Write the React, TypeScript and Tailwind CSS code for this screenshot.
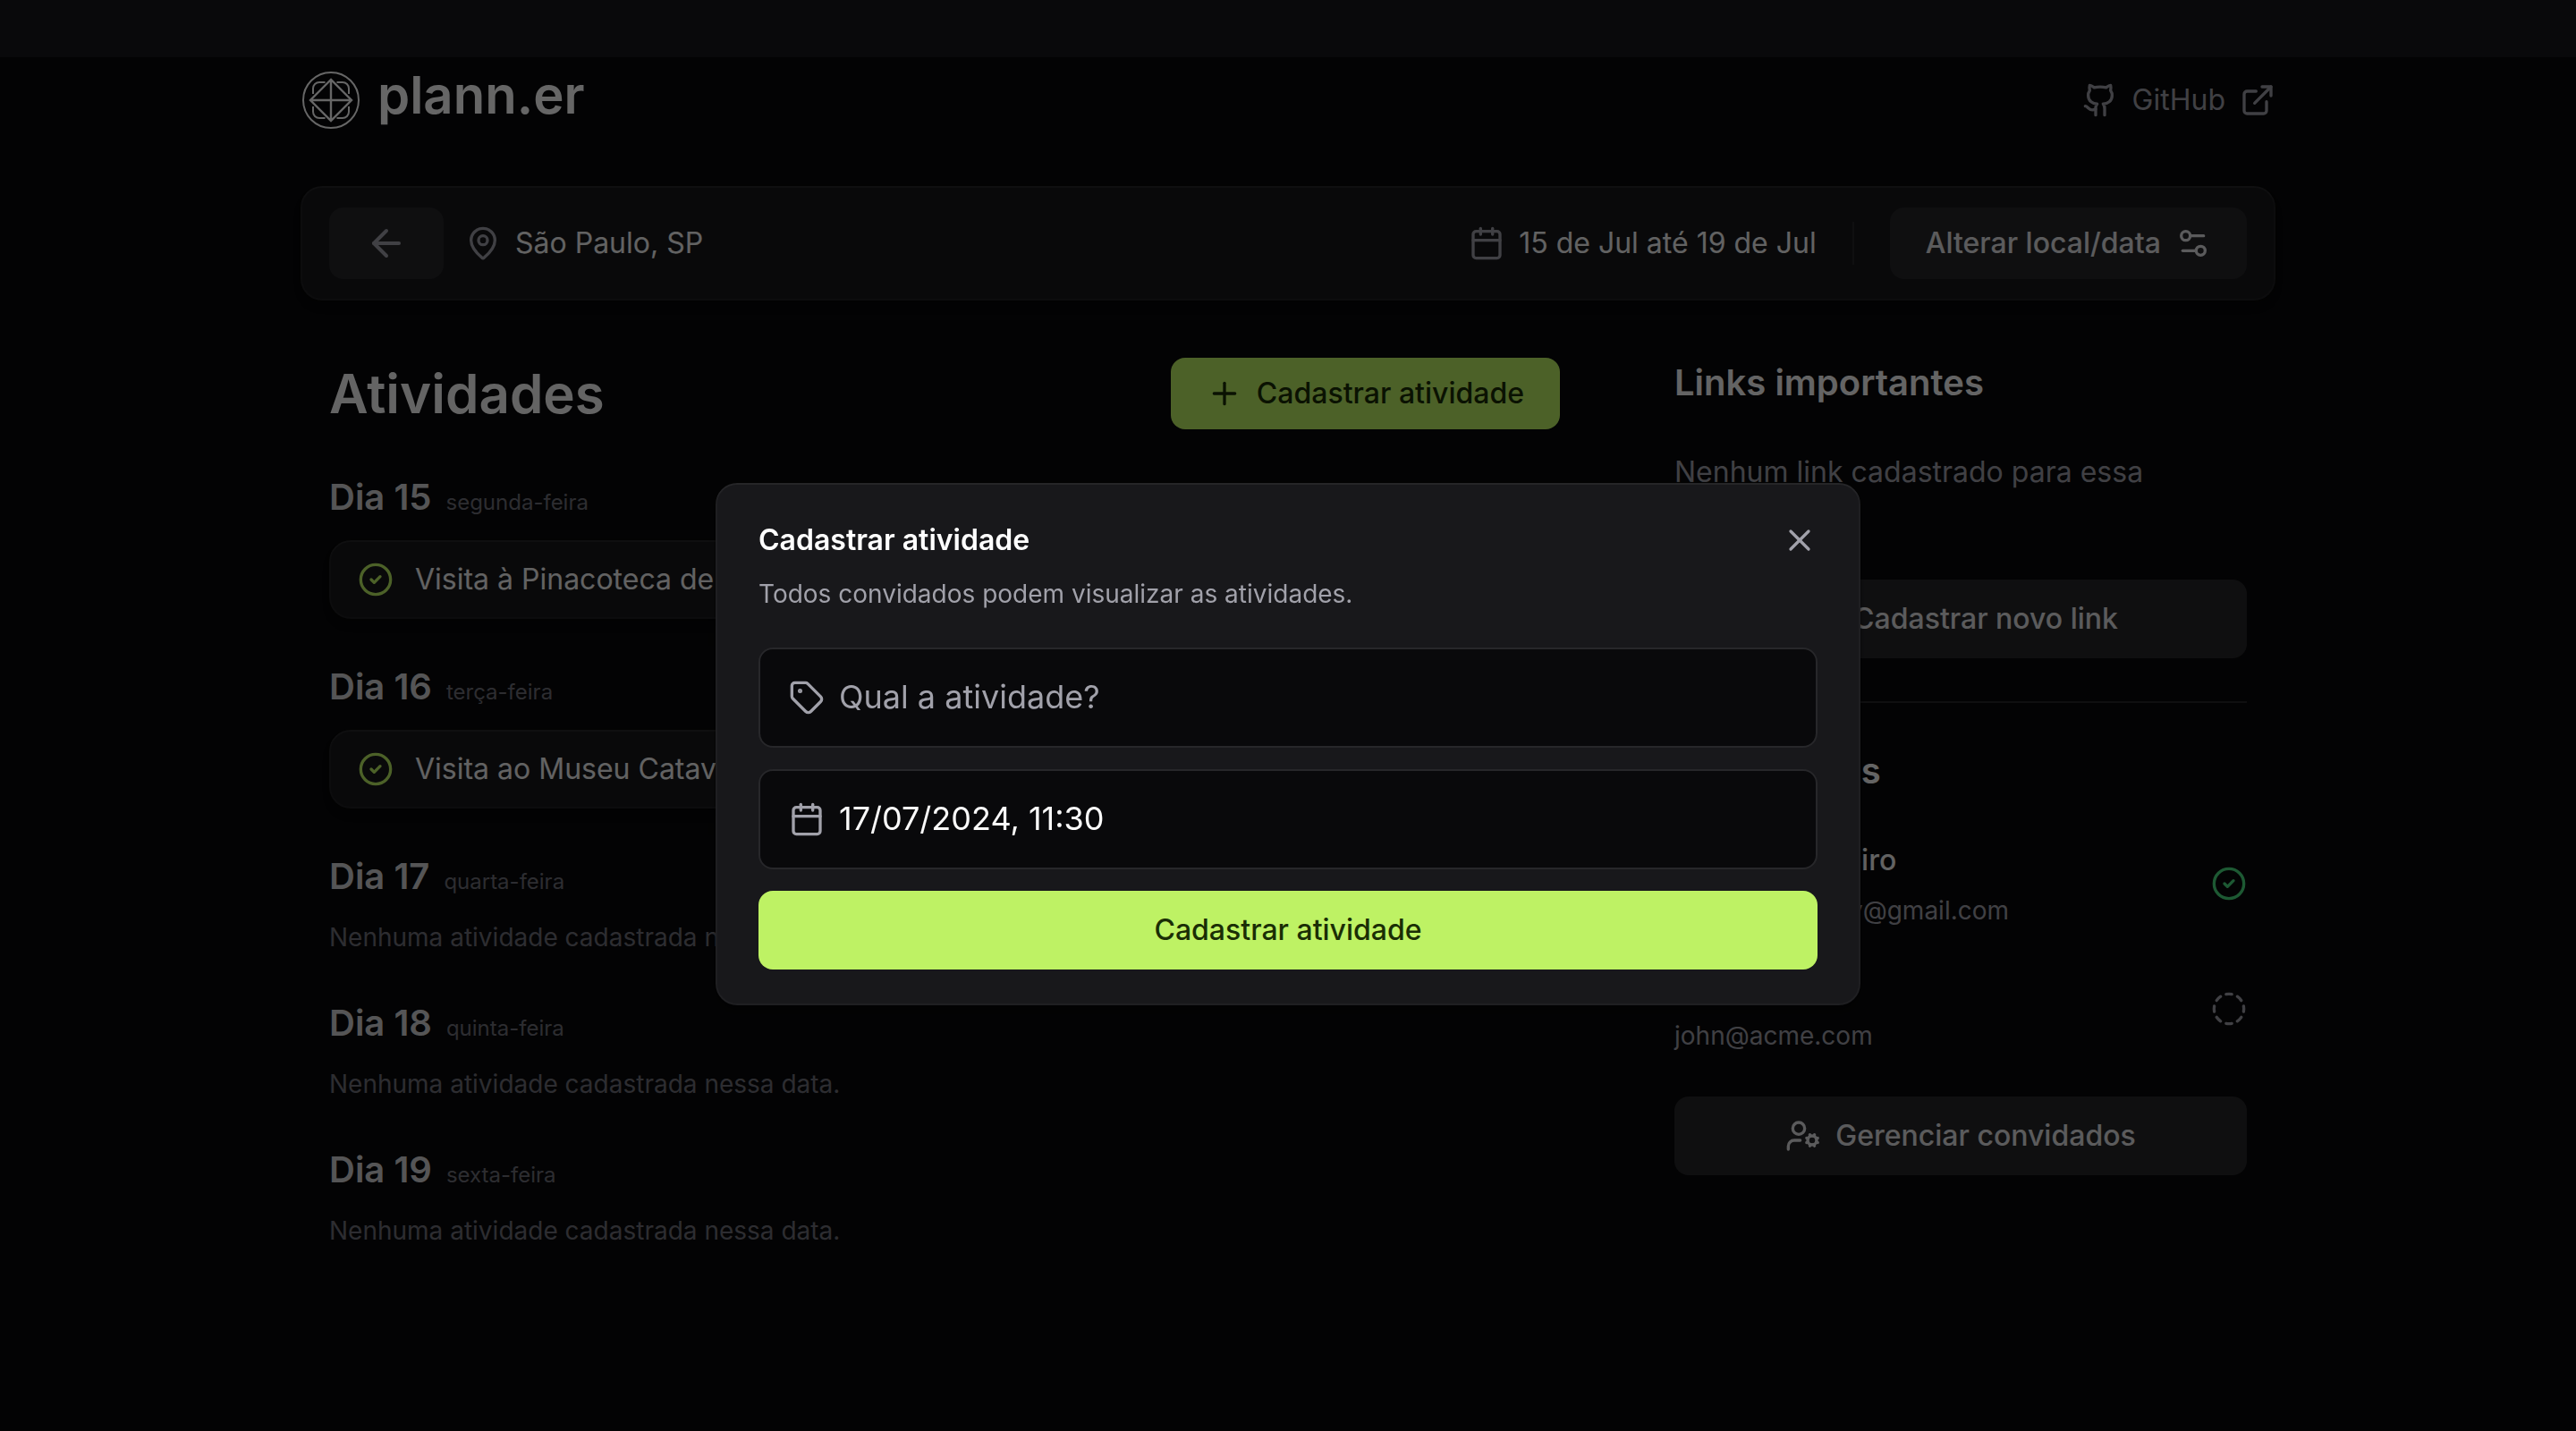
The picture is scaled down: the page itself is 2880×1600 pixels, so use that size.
import {
  ArrowLeft,
  Calendar,
  CircleCheck,
  CircleDashed,
  ExternalLink,
  Github,
  MapPin,
  Plus,
  Settings2,
  Tag,
  UserCog,
  X,
} from "lucide-react";
import type { ReactNode } from "react";

const shape =
  "bg-[#18181b] shadow-[0px_16px_16px_rgba(0,0,0,0.1),0px_8px_8px_rgba(0,0,0,0.1),0px_4px_4px_rgba(0,0,0,0.1),0px_0px_0px_2px_rgba(0,0,0,0.1),inset_0px_0px_0px_2px_rgba(255,255,255,0.03),inset_0px_2px_0px_rgba(255,255,255,0.03)]";

const days = [
  { label: "Dia 15", weekday: "segunda-feira", activity: "Visita à Pinacoteca de São Paulo" },
  { label: "Dia 16", weekday: "terça-feira", activity: "Visita ao Museu Catavento" },
  { label: "Dia 17", weekday: "quarta-feira" },
  { label: "Dia 18", weekday: "quinta-feira" },
  { label: "Dia 19", weekday: "sexta-feira" },
];

const guests = [
  { name: "Hector Monteiro", email: "hectormonteroy@gmail.com", confirmed: true },
  { name: "John Doe", email: "john@acme.com", confirmed: false },
];

function LogoMark() {
  return (
    <svg viewBox="0 0 64 64" className="size-16" fill="none" stroke="currentColor" aria-hidden="true">
      <circle cx="32" cy="32" r="31" strokeWidth="2" />
      <path d="M32 9 9 32l23 23 23-23L32 9ZM32 9v46M9 32h46" strokeWidth="2.4" />
      <path
        d="M25.5 12H19a7 7 0 0 0-7 7v6M38.5 12H45a7 7 0 0 1 7 7v6M52 39v6a7 7 0 0 1-7 7h-6.500M25.500 52H19a7 7 0 0 1-7-7v-6"
        strokeWidth="2"
      />
    </svg>
  );
}

function SecondaryButton({ children, className = "" }: { children: ReactNode; className?: string }) {
  return (
    <button
      type="button"
      className={`flex items-center justify-center gap-4 rounded-2xl bg-[#27272a] px-10 text-[32px] leading-12 font-medium text-[#e4e4e7] ${className}`}
    >
      {children}
    </button>
  );
}

function Header() {
  return (
    <header className="flex h-16 items-center justify-between">
      <div className="flex items-center gap-5 pl-0.5 text-white">
        <LogoMark />
        <span className="pb-3 text-[58px] leading-14 font-semibold">plann.er</span>
      </div>
      <a href="#github" className="flex items-center gap-4 text-[32px] leading-12 text-[#a1a1aa]">
        <Github className="size-10" />
        GitHub
        <ExternalLink className="size-10" />
      </a>
    </header>
  );
}

function DestinationBar() {
  return (
    <section className={`flex h-32 items-center justify-between rounded-3xl px-8 ${shape}`}>
      <div className="flex items-center gap-6">
        <button type="button" aria-label="Voltar" className="rounded-2xl bg-[#27272a] px-10 py-4 text-[#a1a1aa]">
          <ArrowLeft className="size-12" />
        </button>
        <div className="flex items-center gap-4">
          <MapPin className="size-10 text-[#a1a1aa]" />
          <span className="text-[32px] leading-12 text-[#f4f4f5]">São Paulo, SP</span>
        </div>
      </div>
      <div className="flex items-center gap-10">
        <div className="flex items-center gap-4">
          <Calendar className="size-10 text-[#a1a1aa]" />
          <span className="text-[32px] leading-12 text-[#f4f4f5]">15 de Jul até 19 de Jul</span>
        </div>
        <div className="h-12 w-0.5 bg-[#27272a]" />
        <SecondaryButton className="h-20">
          Alterar local/data
          <Settings2 className="size-10" />
        </SecondaryButton>
      </div>
    </section>
  );
}

function Activities() {
  return (
    <section className="flex flex-1 flex-col gap-12">
      <div className="flex items-center justify-between">
        <h2 className="text-[60px] leading-18 font-semibold text-[#fafafa]">Atividades</h2>
        <button
          type="button"
          className="flex h-20 items-center gap-4 rounded-2xl bg-[#bef264] px-10 text-[32px] leading-12 font-medium text-[#1a2e05]"
        >
          <Plus className="size-10" />
          Cadastrar atividade
        </button>
      </div>
      {days.map((day) => (
        <div key={day.label} className="flex flex-col gap-5">
          <div className="flex items-baseline gap-4">
            <h3 className="text-[40px] leading-14 font-semibold text-[#d4d4d8]">{day.label}</h3>
            <span className="text-2xl text-[#71717a]">{day.weekday}</span>
          </div>
          {day.activity ? (
            <div className={`flex h-22 items-center gap-6 rounded-3xl px-8 ${shape}`}>
              <CircleCheck className="size-10 text-[#bef264]" />
              <span className="text-[32px] leading-12 text-[#f4f4f5]">{day.activity}</span>
            </div>
          ) : (
            <p className="text-[28px] leading-10 text-[#71717a]">Nenhuma atividade cadastrada nessa data.</p>
          )}
        </div>
      ))}
    </section>
  );
}

function Sidebar() {
  return (
    <aside className="flex w-160 shrink-0 flex-col gap-12">
      <h2 className="text-[40px] leading-14 font-semibold text-[#fafafa]">Links importantes</h2>
      <p className="text-[32px] leading-12 text-[#a1a1aa]">Nenhum link cadastrado para essa viagem.</p>
      <SecondaryButton className="h-22">
        <Plus className="size-10" />
        Cadastrar novo link
      </SecondaryButton>
      <div className="h-0.5 bg-[#27272a]" />
      <h2 className="text-[40px] leading-14 font-semibold text-[#fafafa]">Convidados</h2>
      <ul className="flex flex-col gap-10">
        {guests.map((guest) => (
          <li key={guest.email} className="flex items-center justify-between">
            <div className="flex flex-col gap-3">
              <span className="text-[32px] leading-12 font-medium text-[#f4f4f5]">{guest.name}</span>
              <span className="text-[28px] leading-10 text-[#a1a1aa]">{guest.email}</span>
            </div>
            {guest.confirmed ? (
              <CircleCheck className="size-10 text-[#4ade80]" />
            ) : (
              <CircleDashed className="size-10 text-[#a1a1aa]" />
            )}
          </li>
        ))}
      </ul>
      <SecondaryButton className="h-22">
        <UserCog className="size-10" />
        Gerenciar convidados
      </SecondaryButton>
    </aside>
  );
}

function Field({ icon, label, value }: { icon: ReactNode; label: string; value?: string }) {
  return (
    <label className="flex h-28 items-center gap-4 rounded-2xl border-2 border-[#27272a] bg-[#09090b] px-8 text-[#a1a1aa]">
      {icon}
      <input
        type="text"
        aria-label={label}
        placeholder={label}
        defaultValue={value}
        className="min-w-0 flex-1 bg-transparent pb-0.5 text-4xl text-[#fafafa] outline-none placeholder:text-[#a1a1aa]"
      />
    </label>
  );
}

function CreateActivityDialog() {
  return (
    <div className="fixed inset-x-0 top-16 bottom-0 flex items-center justify-center bg-black/60">
      <div
        role="dialog"
        aria-modal="true"
        aria-labelledby="dialog-title"
        className={`flex w-full max-w-7xl flex-col gap-10 rounded-3xl px-12 py-10 ${shape}`}
      >
        <div className="flex flex-col gap-4">
          <div className="flex items-center justify-between">
            <h2 id="dialog-title" className="text-[32px] leading-12 font-semibold text-white">
              Cadastrar atividade
            </h2>
            <button type="button" aria-label="Fechar" className="text-[#a1a1aa]">
              <X className="size-10" />
            </button>
          </div>
          <p className="text-[28px] leading-10 text-[#a1a1aa]">
            Todos convidados podem visualizar as atividades.
          </p>
        </div>
        <form className="flex flex-col gap-6">
          <Field icon={<Tag className="size-10" />} label="Qual a atividade?" />
          <Field icon={<Calendar className="size-10" />} label="Data e horário" value="17/07/2024, 11:30" />
          <button
            type="button"
            className="h-22 rounded-2xl bg-[#bef264] text-[32px] leading-12 font-medium text-[#1a2e05]"
          >
            Cadastrar atividade
          </button>
        </form>
      </div>
    </div>
  );
}

export default function App() {
  return (
    <div className="min-h-screen bg-[#09090b] font-['Inter',sans-serif] antialiased">
      <div className="mx-auto flex max-w-[2304px] flex-col gap-16 px-12 py-20">
        <Header />
        <DestinationBar />
        <main className="flex gap-32 px-8">
          <Activities />
          <Sidebar />
        </main>
      </div>
      <CreateActivityDialog />
    </div>
  );
}
